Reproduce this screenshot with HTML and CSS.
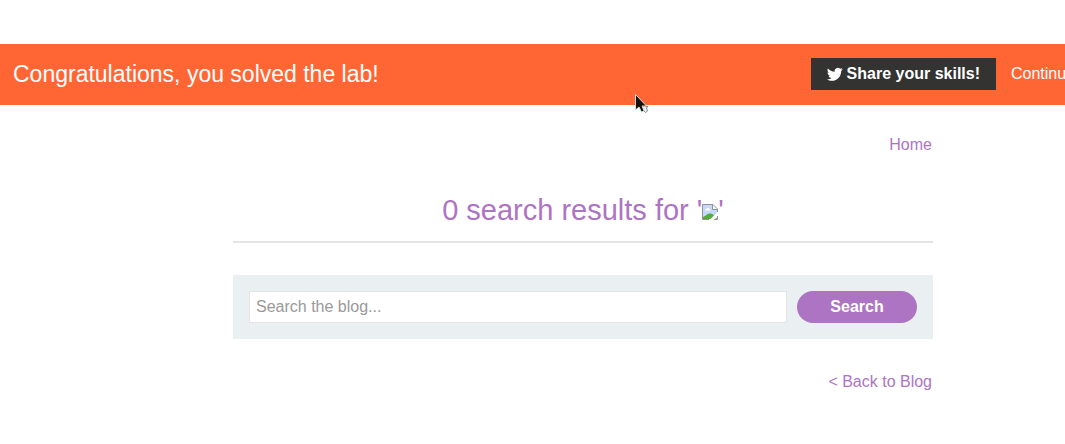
FILE: index.html
```html
<!DOCTYPE html>
<html lang="en">
<head>
<meta charset="utf-8">
<title>Search results</title>
<link rel="stylesheet" href="styles.css">
</head>
<body>
<section class="banner">
  <p class="banner-title">Congratulations, you solved the lab!</p>
  <button class="share" type="button">
    <svg class="bird" viewBox="0 0 24 24" aria-hidden="true"><path d="M23.600 4.900c-.9.400-1.800.6-2.800.8 1-.6 1.800-1.600 2.100-2.700-.9.600-2 1-3.100 1.200A4.900 4.900 0 0 0 11.500 8.700C7.400 8.500 3.800 6.500 1.400 3.600c-1.300 2.200-.7 5.100 1.500 6.600-.8 0-1.600-.2-2.200-.6 0 2.300 1.600 4.400 3.900 4.900-.7.200-1.500.2-2.200.1.600 2 2.400 3.400 4.600 3.400A9.900 9.900 0 0 1-.3 20c2.200 1.400 4.800 2.200 7.500 2.200 9.100 0 14.300-7.700 14-14.600 1-.7 1.800-1.600 2.400-2.700z"/></svg>
    <span>Share your skills!</span>
  </button>
  <a class="continue" href="#">Continue</a>
  <svg class="pointer" viewBox="0 0 14 20" aria-hidden="true">
    <path class="pointer-trail" d="M7 12.500h6l-1.500 1.500 1 3-2 1.500-2-2z"/>
    <path class="pointer-arrow" d="M.500.500v15.500l3.500-3 2.500 5 2.500-1.200L7 12h4.500z"/>
  </svg>
</section>
<main class="page">
  <nav class="top-nav"><a href="#">Home</a></nav>
  <h1 class="results">0 search results for '<svg class="broken" viewBox="0 0 16 16" role="img" aria-label="Missing image">
    <path fill="#c4d9fa" d="M1 1h10l4 4v10H1z"/>
    <path fill="#fff" d="M3 6.500c0-1.500 1-1.800 1.700-1.600C5 3.500 7 3.500 7.300 5 8.500 5 8.500 6.500 8 6.500z"/>
    <path fill="#55ad38" d="M1 15v-2c3-1 4-3.500 7-3.500 2.500 0 5 2 7 5.500z"/>
    <path fill="#fff" d="M16 7.500 7.500 16H12l4-4z"/>
    <path fill="#fff" d="M11 0v5h5z"/>
    <path fill="none" stroke="#929292" d="M7 15.500H.500V.500h10.500l4.500 4.500v3M10.500.500v5h5M12 15.500h3.500V12"/>
  </svg>'</h1>
  <form class="search">
    <input class="term" type="text" placeholder="Search the blog..." aria-label="Search the blog">
    <button class="submit" type="button">Search</button>
  </form>
  <div class="back"><a href="#">&lt; Back to Blog</a></div>
</main>
</body>
</html>
```
FILE: styles.css
```css
* { box-sizing: border-box; }
body {
  margin: 0;
  padding-top: 44px;
  background: #fff;
  color: #333332;
  font: 16px/20px "Liberation Sans", Arial, sans-serif;
}
a { color: #ad74c3; text-decoration: none; }

.banner {
  position: relative;
  display: flex;
  align-items: center;
  padding: 14px 0 15px 13px;
  background: #ff6633;
  color: #fff;
}
.banner-title {
  flex: 1;
  margin: 0;
  font-size: 23px;
  line-height: 32px;
}
.share {
  display: flex;
  align-items: center;
  gap: 4px;
  height: 32px;
  padding: 0 16px;
  border: 0;
  background: #333332;
  color: #fff;
  font: bold 16px/20px "Liberation Sans", Arial, sans-serif;
}
.bird { width: 16px; height: 16px; fill: #fff; }
.continue {
  width: 54px;
  margin-left: 15px;
  overflow: hidden;
  white-space: nowrap;
  color: #fff;
}
.pointer {
  position: absolute;
  top: 50px;
  left: 635px;
  width: 14px;
  height: 20px;
}
.pointer-arrow { fill: #111; stroke: #ddd; stroke-width: 1; }
.pointer-trail { fill: #eee; stroke: #888; stroke-width: 1; }

.page { padding: 30px 132px 0 233px; }
.top-nav, .back { padding-right: 1px; text-align: right; }
.results {
  margin: 38px 0 0;
  padding-bottom: 14px;
  border-bottom: 2px solid #e4e4e4;
  color: #ad74c3;
  font-size: 29px;
  font-weight: normal;
  line-height: 34px;
  text-align: center;
}
.broken { width: 16px; height: 16px; }
.search {
  display: flex;
  gap: 10px;
  margin: 32px 0 33px;
  padding: 16px;
  background: #eaeff2;
}
.term {
  flex: 1;
  min-width: 0;
  height: 32px;
  padding: 0 6px;
  border: 1px solid #e4e4e4;
  background: #fff;
  color: #333332;
  font: inherit;
}
.term::placeholder { color: #999; }
.submit {
  width: 120px;
  height: 32px;
  border: 0;
  border-radius: 16px;
  background: #ad74c3;
  color: #fff;
  font: bold 16px/20px "Liberation Sans", Arial, sans-serif;
}
```
